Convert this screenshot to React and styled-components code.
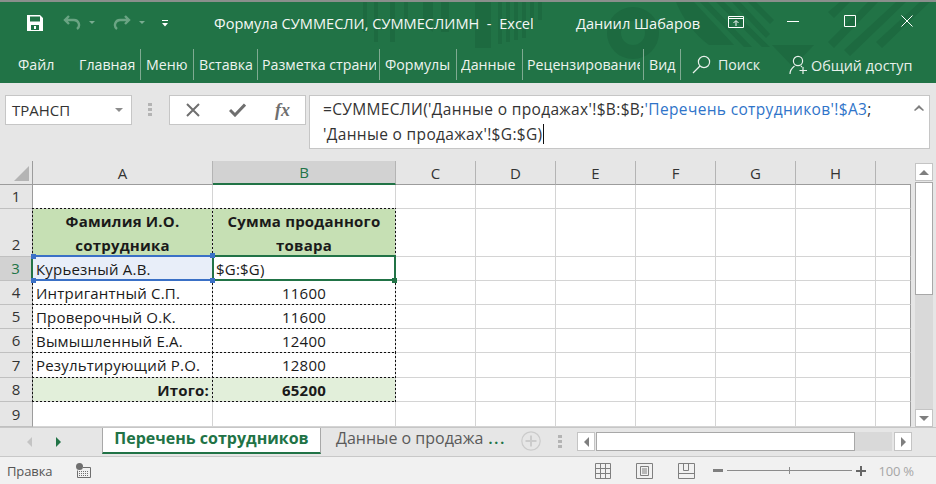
import React from "react";
import styled, { createGlobalStyle } from "styled-components";

const Global = createGlobalStyle`
  html, body { margin: 0; padding: 0; background: #e6e6e6; }
  * { box-sizing: border-box; }
`;
const Win = styled.div`
  width: 936px; height: 484px; display: flex; flex-direction: column; overflow: hidden;
  font-family: "Open Sans", "Noto Sans", sans-serif; background: #e6e6e6; color: #222;
`;
const Head = styled.header`
  position: relative; height: 83px; background: #217346; border-top: 2px solid #8a8f8c; color: #fff; overflow: hidden;
`;
const Pattern = styled.svg`
  position: absolute; left: 0; top: -2px; width: 936px; height: 83px; 
`;
const TitleRow = styled.div`
  position: relative; height: 44px; display: flex; align-items: center; padding-left: 27px; padding-bottom: 2px;
`;
const QuickIcon = styled.svg`
  display: block; flex: none; margin-left: ${p => p.$ml || 0}px; opacity: ${p => p.$op || 1};
`;
const WinIcon = styled(QuickIcon)`
  position: absolute; left: ${p => p.$x}px; top: ${p => p.$y}px;
`;
const TitleText = styled.span`
  font-size: 14.6px; line-height: 20px; white-space: pre; color: #f4f8f5; position: absolute; top: 11px; left: ${p => p.$x}px;
`;
const Ribbon = styled.nav`
  position: relative; height: 33px; display: flex; align-items: center; margin-top: 2px;
`;
const RTab = styled.div`
  width: ${p => p.$w}px; height: 31px; flex: none; padding-left: ${p => p.$pl}px; padding-right: ${p => p.$sep ? 3 : 0}px; white-space: nowrap;
  font-size: 14.2px; line-height: 32px; color: #eef4f0; margin-right: 1px;
  border-right: ${p => p.$sep ? "1px solid #7fab92" : "none"};
`;
const RLabel = styled.span`
  display: block; overflow: hidden;
`;
const RAction = styled.div`
  display: flex; align-items: center; font-size: ${p => p.$fs || 14}px; color: #e8f0eb; flex: none; margin-left: ${p => p.$ml}px; gap: ${p => p.$gap}px;
`;
const ShareText = styled.span` margin-top: 2px; `;
const FormulaRow = styled.section`
  height: 78px; padding: 12px 6px 0 5px; display: flex; align-items: flex-start;
`;
const NameBox = styled.div`
  width: 127px; height: 30px; background: #fff; border: 1px solid #c6c6c6; display: flex; align-items: center; justify-content: space-between;
  padding: 0 8px 0 6px; font-size: 15px; color: #333;
`;
const Caret = styled.i`
  width: 0; height: 0; border-left: 4px solid transparent; border-right: 4px solid transparent; border-top: 4px solid #8c8c8c; display: block;
`;
const Grip = styled.div`
  width: 4px; height: 14px; margin: 8px 17px 0 16px; flex: none;
  background: repeating-linear-gradient(#b4b4b4 0 3px, transparent 3px 5px);
`;
const FxButtons = styled.div`
  width: 137px; height: 30px; background: #fff; border: 1px solid #c6c6c6; display: flex; align-items: center; margin-right: 3px; flex: none; padding-left: 0;
`;
const FxSlot = styled.div`
  width: 45px; display: flex; align-items: center; justify-content: center;
`;
const Fx = styled.span`
  font: italic bold 18px "Liberation Serif", serif; color: #6f6f6f;
`;
const FormulaBox = styled.div`
  position: relative; width: 621px; height: 54px; background: #fff; border: 1px solid #c6c6c6; padding: 1px 0 0 13px;
  font-size: 15.5px; letter-spacing: 0.34px; line-height: 25px; color: #333; white-space: nowrap; 
`;
const Ref = styled.span` color: #2f74c9; `;
const TextCaret = styled.span` display: inline-block; width: 1px; height: 20px; background: #111; vertical-align: -4px; `;
const Chevron = styled.svg` position: absolute; right: 5px; top: 9px; `;
const SheetRow = styled.div` display: flex; height: 266px; `;
const Grid = styled.div`
  width: 911px; display: grid; flex: none;
  grid-template-columns: 33px 180px 183px 80px 80px 80px 80px 80px 80px 35px;
  grid-template-rows: 24px 24px 48px 24px 24px 24px 24px 25px 24px 25px;
`;
const ColHead = styled.div`
  display: flex; align-items: center; justify-content: center; font-size: 15px;
  background: ${p => p.$on ? "#d2d2d2" : "#e6e6e6"}; color: ${p => p.$on ? "#217346" : "#333"};
  border-right: ${p => p.$last ? "none" : "1px solid #b4b4b4"}; border-bottom: ${p => p.$on ? "2px solid #217346" : "1px solid #9c9c9c"};
`;
const Corner = styled.div`
  position: relative; background: #e6e6e6; border-right: 1px solid #9c9c9c; border-bottom: 1px solid #9c9c9c;
  &::after { content: ""; position: absolute; right: 3px; bottom: 3px; border-style: solid; border-width: 0 0 15px 15px; border-color: transparent transparent #b4b4b4 transparent; }
`;
const RowHead = styled.div`
  display: flex; align-items: flex-end; justify-content: center; font-size: 15px; padding-bottom: 1px; line-height: 22px;
  background: ${p => p.$on ? "#d2d2d2" : "#e6e6e6"}; color: ${p => p.$on ? "#217346" : "#333"};
  border-right: ${p => p.$on ? "2px solid #217346" : "1px solid #9c9c9c"}; border-bottom: 1px solid #c0c0c0;
`;
const dots = (deg) => `repeating-linear-gradient(${deg}deg, #111 0 2px, transparent 2px 4px)`;
const Cell = styled.div`
  position: relative; background: ${p => p.$bg || "#fff"}; border-right: 1px solid ${p => p.$last ? "#9c9c9c" : "#d4d4d4"}; border-bottom: 1px solid #d4d4d4;
  font-size: 15px; line-height: 24px; font-weight: ${p => p.$bold ? 700 : 400}; color: #1a1a1a; text-align: ${p => p.$align || "left"};
  padding: 0 3px; white-space: nowrap; letter-spacing: 0.2px;
  ${p => p.$ants && `&::after { content: ""; position: absolute; inset: -1px -1px -1px -1px; pointer-events: none;
    background: ${dots(90)} top left / 100% 1px no-repeat, ${dots(90)} bottom left / 100% 1px no-repeat,
      ${dots(0)} top left / 1px 100% no-repeat, ${dots(0)} top right / 1px 100% no-repeat; }`}
`;
const Sel = styled.div`
  position: absolute; z-index: 2; inset: ${p => p.$inset}; border-style: solid; border-color: ${p => p.$c};
  border-width: ${p => p.$topBottom ? "2px 0" : "2px"};
`;
const Handle = styled.b`
  position: absolute; z-index: 3; width: 5px; height: 5px; background: ${p => p.$c}; border: 0; 
  left: ${p => p.$x}; right: ${p => p.$r}; top: ${p => p.$y}; bottom: ${p => p.$b};
`;
const VScroll = styled.aside`
  width: 25px; flex: none; padding: 2px 3px 0 4px; display: flex; flex-direction: column;
`;
const SBtn = styled.div`
  flex: none; width: ${p => p.$w || 18}px; height: ${p => p.$h || 18}px; background: #fff; border: 1px solid #c4c4c4; display: flex; align-items: center; justify-content: center;
`;
const VThumb = styled.div` height: 113px; margin-top: 1px; background: #fff; border: 1px solid #a8a8a8; flex: none; `;
const VTrack = styled.div` flex: 1; background: #d9d9d9; `;
const Arrow = styled.i`
  display: block; width: 0; height: 0; border-style: solid; border-color: transparent;
  ${p => p.$d === "up" && `border-width: 0 5px 5px; border-bottom-color: #7f7f7f;`}
  ${p => p.$d === "down" && `border-width: 5px 5px 0; border-top-color: #7f7f7f;`}
  ${p => p.$d === "left" && `border-width: 5px 5px 5px 0; border-right-color: ${p.$c || "#7f7f7f"};`}
  ${p => p.$d === "right" && `border-width: 5px 0 5px 5px; border-left-color: ${p.$c || "#7f7f7f"};`}
`;
const TabBar = styled.div`
  height: 30px; display: flex; align-items: flex-start; border-top: 1px solid #c6c6c6; border-bottom: 1px solid #c8c8c8;
`;
const Nav = styled.div`
  width: 102px; height: 27px; flex: none; display: flex; align-items: center; padding-left: 27px; gap: 24px; 
`;
const Tab = styled.div`
  width: ${p => p.$on ? 219 : 199}px; height: 26px; flex: none; font-size: 16px; line-height: 20px; white-space: nowrap;
  text-align: ${p => p.$on ? "center" : "left"}; padding-left: ${p => p.$on ? 0 : 15}px;
  background: ${p => p.$on ? "#fff" : "transparent"}; color: ${p => p.$on ? "#217346" : "#5a5a5a"}; font-weight: ${p => p.$on ? 700 : 400};
  border-left: ${p => p.$on ? "1px solid #a8a8a8" : "none"}; border-right: ${p => p.$on ? "1px solid #a8a8a8" : "none"}; border-bottom: ${p => p.$on ? "2px solid #217346" : "none"};
`;
const Dots = styled.span` color: #217346; font-size: 14px; font-weight: 700; letter-spacing: 2px; margin-left: 5px; `;
const AddSheet = styled.svg` flex: none; margin: 3px 0 0 1px; display: block; `;
const BarGrip = styled(Grip)` margin: 7px 15px 0 17px; `;
const HScroll = styled.div`
  display: flex; flex: none; width: 336px; margin-top: 4px; height: 19px;
`;
const HThumb = styled.div` width: 259px; height: 19px; background: #fff; border: 1px solid #a8a8a8; margin-left: 1px; flex: none;`;
const HTrack = styled.div` width: 37px; background: #d9d9d9; flex: none; margin-right: 2px; `;
const Status = styled.footer`
  flex: 1; background: #f1f1f1; display: flex; align-items: center; padding-left: 7px; font-size: 13px; letter-spacing: -0.1px; color: #555;
`;
const StatIcon = styled.svg` flex: none; display: block; margin-left: ${p => p.$ml}px; `;
const Slider = styled.div`
  position: relative; width: 125px; height: 1px; background: #8c8c8c; margin: 0 4px; flex: none;
  &::after { content: ""; position: absolute; left: 62px; top: -3px; width: 1px; height: 7px; background: #8c8c8c; }
`;
const Zoom = styled.span` font-size: 13px; color: #a6a6a6; margin-left: 12px; letter-spacing: -0.2px;`;

const cols = ["A", "B", "C", "D", "E", "F", "G", "H"];
const Blank = () => <>{[0,1,2,3,4,5,6].map(i => <Cell key={i} $last={i === 6} />)}</>;
const cellsData = [
  ["Интригантный С.П.", "11600"],
  ["Проверочный О.К.", "11600"],
  ["Вымышленный Е.А.", "12400"],
  ["Результирующий Р.О.", "12800"],
];
const tabs = [
  ["Файл", 67, 18, false],
  ["Главная", 73, 11, true],
  ["Меню", 52, 4, true],
  ["Вставка", 63, 4, true],
  ["Разметка страницы", 121, 3, true],
  ["Формулы", 76, 4, true],
  ["Данные", 65, 3, true],
  ["Рецензирование", 120, 3, true],
  ["Вид", 36, 4, true],
];

export default function App() {
  return (
    <Win>
      <Global />
      <Head>
        <Pattern viewBox="0 0 936 83" fill="#1d6a40">
          <path d="M363 2h4v30h-4zM374 2h4v40h-4zM390 2h5v40h-5zM404 2h4v22h-4zM423 2h10v30l-10-8zM441 2h8v30h-8zM475 2h16v46h-16zM498 2h4v42h-4zM506 2h4v40h-4zM514 2h4v38h-4zM522 2h4v36h-4zM530 2h4v26h-4zM538 2h4v18h-4z"/>
          <path fillRule="evenodd" d="M633 2m-26 31a26 26 0 1 0 52 0a26 26 0 1 0-52 0zm14 0a12 12 0 1 1 24 0a12 12 0 1 1-24 0z"/>
          <path d="M676 2h18l40 43h-15l-10-0c-14-10-26-26-33-43z"/>
          <path d="M700 2h8l44 45h-8zM716 2h8l46 45h-8zM732 2h8l30 32-4 4zM748 2h8l18 18-4 4z"/>
          <path d="M772 45h42l-21 22z"/>
          <path d="M840 2h10l-16 16-6-6zM868 2h10l-44 46-6-6zM896 2h10l-56 54-6-6zM920 2h10l-48 46-6-6z"/>
        </Pattern>
        <TitleRow>
          <QuickIcon width="16" height="16" viewBox="0 0 16 16">
            <path fill="#fff" fillRule="evenodd" d="M0 0h13l3 3v13H0zM3 1.5v5h10v-5zM4 10v5h8v-5z"/>
            <path fill="#fff" d="M7 11h2v3H7z"/>
          </QuickIcon>
          <QuickIcon $ml="20" $op="0.4" width="18" height="16" viewBox="0 0 18 16" fill="none" stroke="#d8efe0" strokeWidth="2.4">
            <path d="M6 1 2 5l4 4M2 5h9a5 5 0 0 1 3 9"/>
          </QuickIcon>
          <QuickIcon $ml="8" $op="0.4" width="6" height="4" viewBox="0 0 6 4"><path fill="#fff" d="M0 0h6L3 3z"/></QuickIcon>
          <QuickIcon $ml="18" $op="0.4" width="18" height="16" viewBox="0 0 18 16" fill="none" stroke="#d8efe0" strokeWidth="2.4">
            <path d="M12 1l4 4-4 4M16 5H7a5 5 0 0 0-3 9"/>
          </QuickIcon>
          <QuickIcon $ml="8" $op="0.4" width="6" height="4" viewBox="0 0 6 4"><path fill="#fff" d="M0 0h6L3 3z"/></QuickIcon>
          <QuickIcon $ml="17" width="6" height="7" viewBox="0 0 6 7"><path fill="#fff" d="M0 0h6v1H0zM0 3h6L3 6.5z"/></QuickIcon>
          <TitleText $x={214}>Формула СУММЕСЛИ, СУММЕСЛИМН  -  Excel</TitleText>
          <TitleText $x={576}>Даниил Шабаров</TitleText>
          <WinIcon $x={728} $y={13} width="16" height="14" viewBox="0 0 16 14" fill="none" stroke="#fff">
            <path d="M.5 1.5h15v11H.5zM.5 3.5h15M8 11V6M5.5 8 8 5.5 10.5 8"/>
          </WinIcon>
          <WinIcon $x={787} $y={19} width="12" height="2" viewBox="0 0 12 2"><path fill="#fff" d="M0 0h12v1H0z"/></WinIcon>
          <WinIcon $x={844} $y={13} width="12" height="12" viewBox="0 0 12 12" fill="none" stroke="#fff"><path d="M.5.5h11v11H.5z"/></WinIcon>
          <WinIcon $x={901} $y={13} width="12" height="12" viewBox="0 0 12 12" fill="none" stroke="#fff"><path d="M.5.5l11 11M11.5.5l-11 11"/></WinIcon>
        </TitleRow>
        <Ribbon>
          {tabs.map(([t, w, pl, sep]) => <RTab key={t} $w={w} $pl={pl} $sep={sep}><RLabel>{t}</RLabel></RTab>)}
          <RAction $ml={10} $gap={7} $fs={14.2}>
            <svg width="19" height="19" viewBox="0 0 19 19" fill="none" stroke="#e8f0eb" strokeWidth="1.2"><circle cx="12" cy="7" r="5.6"/><path d="M8 11 1 18"/></svg>
            Поиск
          </RAction>
          <RAction $ml={29} $gap={3} $fs={14.4}>
            <svg width="19" height="20" viewBox="0 0 19 20" fill="none" stroke="#e8f0eb" strokeWidth="1.2"><circle cx="9" cy="6" r="4.6"/><path d="M1 19c0-4 2-6 4.5-8M12 11l1 1M14 12v7M10.5 15.5h7.5"/></svg>
            <ShareText>Общий доступ</ShareText>
          </RAction>
        </Ribbon>
      </Head>
      <FormulaRow>
        <NameBox>ТРАНСП<Caret /></NameBox>
        <Grip />
        <FxButtons>
          <FxSlot><svg width="14" height="14" viewBox="0 0 14 14" stroke="#6f6f6f" strokeWidth="2"><path d="M1 1l12 12M13 1 1 13"/></svg></FxSlot>
          <FxSlot><svg width="17" height="14" viewBox="0 0 17 14" fill="none" stroke="#6f6f6f" strokeWidth="3"><path d="M1 7l5 5L16 1.5"/></svg></FxSlot>
          <FxSlot><Fx>fx</Fx></FxSlot>
        </FxButtons>
        <FormulaBox>
          =СУММЕСЛИ('Данные о продажах'!$B:$B;<Ref>'Перечень сотрудников'!$A3</Ref>;<br />
          'Данные о продажах'!$G:$G)<TextCaret />
          <Chevron width="10" height="6" viewBox="0 0 10 6"><path fill="#7f7f7f" d="M0 5l5-5 5 5-1 1-4-3-4 3z"/></Chevron>
        </FormulaBox>
      </FormulaRow>
      <SheetRow>
        <Grid>
          <Corner />
          {cols.map(c => <ColHead key={c} $on={c === "B"}>{c}</ColHead>)}
          <ColHead $last />

          <RowHead>1</RowHead>
          <Cell /><Cell /><Blank />

          <RowHead>2</RowHead>
          <Cell $bg="#c6e0b4" $bold $align="center" $ants>Фамилия И.О.<br />сотрудника</Cell>
          <Cell $bg="#c6e0b4" $bold $align="center" $ants>Сумма проданного<br />товара</Cell>
          <Blank />

          <RowHead $on>3</RowHead>
          <Cell $bg="#e8eef9">
            Курьезный А.В.
            <Sel $c="#3a70c6" $topBottom $inset="-2px 0 -1px 0" />
            <Handle $c="#3a70c6" $x="-2px" $y="-3px" />
            <Handle $c="#3a70c6" $x="-2px" $b="-3px" />
          </Cell>
          <Cell>
            $G:$G)
            <Sel $c="#217346" $inset="-2px -1px -1px -1px" />
            <Handle $c="#3a70c6" $x="-3px" $y="-4px" />
            <Handle $c="#3a70c6" $x="-3px" $b="-3px" />
            <Handle $c="#217346" $r="-2px" $b="-3px" />
          </Cell>
          <Blank />

          {cellsData.map((r, i) => (
            <React.Fragment key={r[0]}>
              <RowHead>{i + 4}</RowHead>
              <Cell $ants>{r[0]}</Cell>
              <Cell $ants $align="center">{r[1]}</Cell>
              <Blank />
            </React.Fragment>
          ))}

          <RowHead>8</RowHead>
          <Cell $bg="#e2efda" $bold $align="right" $ants>Итого:</Cell>
          <Cell $bg="#e2efda" $bold $align="center" $ants>65200</Cell>
          <Blank />

          <RowHead>9</RowHead>
          <Cell /><Cell /><Blank />
        </Grid>
        <VScroll>
          <SBtn><Arrow $d="up" /></SBtn>
          <VThumb />
          <VTrack />
          <SBtn><Arrow $d="down" /></SBtn>
        </VScroll>
      </SheetRow>
      <TabBar>
        <Nav><Arrow $d="left" $c="#c4c4c4" /><Arrow $d="right" $c="#217346" /></Nav>
        <Tab $on>Перечень сотрудников</Tab>
        <Tab>Данные о продажа<Dots>...</Dots></Tab>
        <AddSheet width="20" height="20" viewBox="0 0 20 20" fill="none" stroke="#cbcbcb" strokeWidth="1.2"><circle cx="10" cy="10" r="9.2"/><path d="M10 4.5v11M4.5 10h11" strokeWidth="2"/></AddSheet>
        <BarGrip />
        <HScroll>
          <SBtn $h={19}><Arrow $d="left" /></SBtn>
          <HThumb />
          <HTrack />
          <SBtn $h={19}><Arrow $d="right" /></SBtn>
        </HScroll>
      </TabBar>
      <Status>
        Правка
        <StatIcon $ml={24} width="15" height="15" viewBox="0 0 15 15"><circle cx="3.5" cy="3.5" r="3.5" fill="#6f6f6f"/><path fill="none" stroke="#6f6f6f" d="M1.5 7.5v7h13v-10H7"/><path stroke="#6f6f6f" strokeDasharray="1 1" d="M3 8.5h10M3 10.5h10M3 12.5h10"/></StatIcon>
        <StatIcon $ml={504} width="16" height="16" viewBox="0 0 16 16" fill="none" stroke="#7f7f7f"><path d="M.5.5h15v15H.5zM.5 5.5h15M.5 10.5h15M5.5.5v15M10.5.5v15"/></StatIcon>
        <StatIcon $ml={25} width="17" height="16" viewBox="0 0 17 16" fill="none" stroke="#7f7f7f"><path d="M.5.5h16v15H.5zM4.5 3.5h8v9h-8zM6 6h5M6 8h5M6 10h5"/></StatIcon>
        <StatIcon $ml={25} width="17" height="16" viewBox="0 0 17 16" fill="none" stroke="#7f7f7f"><path d="M.5.5h16v15H.5zM.5 10.5h16M5.5.5v7h5v-7"/></StatIcon>
        <StatIcon $ml={18} width="10" height="3" viewBox="0 0 10 3"><path fill="#7f7f7f" d="M0 0h10v3H0z"/></StatIcon>
        <Slider />
        <StatIcon width="10" height="10" viewBox="0 0 10 10"><path fill="#666" d="M4 0h2v4h4v2H6v4H4V6H0V4h4z"/></StatIcon>
        <Zoom>100 %</Zoom>
      </Status>
    </Win>
  );
}
